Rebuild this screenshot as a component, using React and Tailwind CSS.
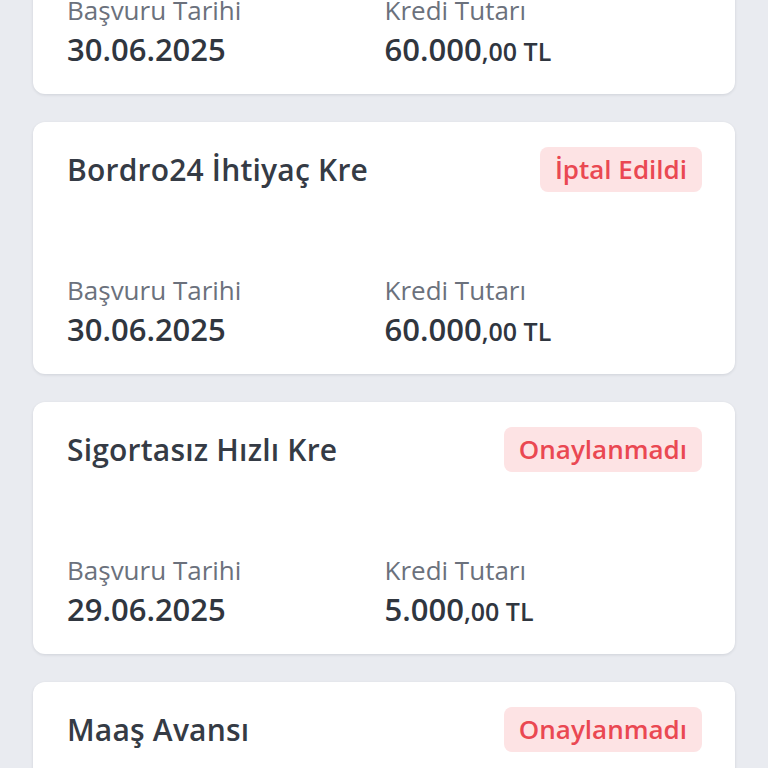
import React from 'react';

const APPLICATIONS = [
  { id: 1, title: 'Bordro24 İhtiyaç Kre', status: 'İptal Edildi', date: '30.06.2025', amount: '60.000', cents: ',00 TL' },
  { id: 2, title: 'Bordro24 İhtiyaç Kre', status: 'İptal Edildi', date: '30.06.2025', amount: '60.000', cents: ',00 TL' },
  { id: 3, title: 'Sigortasız Hızlı Kre', status: 'Onaylanmadı', date: '29.06.2025', amount: '5.000', cents: ',00 TL' },
  { id: 4, title: 'Maaş Avansı', status: 'Onaylanmadı', date: '', amount: '', cents: '' },
];

const ApplicationCard = ({ title, status, date, amount, cents }) => {
  return (
    <div className="bg-white rounded-[12px] shadow-[0_1px_3px_rgba(30,41,59,0.12)] pl-[34px] pr-[33px] pt-[25px] pb-[27px] shrink-0">
      {/* Header */}
      <div className="flex items-center justify-between">
        <h3 className="text-[30px] leading-[36px] tracking-[0.2px] font-semibold text-[#353b45]">{title}</h3>
        <span className="h-[45px] flex items-center px-[15px] rounded-[8px] bg-[#fde3e4] text-[#ea4852] text-[26px] font-semibold">
          {status}
        </span>
      </div>

      {/* Details */}
      <div className="grid grid-cols-2 mt-[82px]">
        <div className="flex flex-col gap-[5px]">
          <span className="text-[26px] leading-[32px] text-[#6b717c]">Başvuru Tarihi</span>
          <span className="text-[31px] leading-[36px] font-semibold text-[#30363f]">{date}</span>
        </div>
        <div className="flex flex-col gap-[5px]">
          <span className="text-[26px] leading-[32px] text-[#6b717c]">Kredi Tutarı</span>
          <span className="h-[36px] text-[31px] leading-[36px] font-semibold text-[#30363f]">
            {amount}
            <span className="text-[25px] leading-none">{cents}</span>
          </span>
        </div>
      </div>
    </div>
  );
};

export default function App() {
  return (
    <div className="h-[768px] overflow-hidden bg-[#e9ebf0] font-['Open_Sans',sans-serif]">
      <div className="flex flex-col gap-[28px] px-[33px] -mt-[158px]">
        {APPLICATIONS.map((app) => (
          <ApplicationCard key={app.id} {...app} />
        ))}
      </div>
    </div>
  );
}
